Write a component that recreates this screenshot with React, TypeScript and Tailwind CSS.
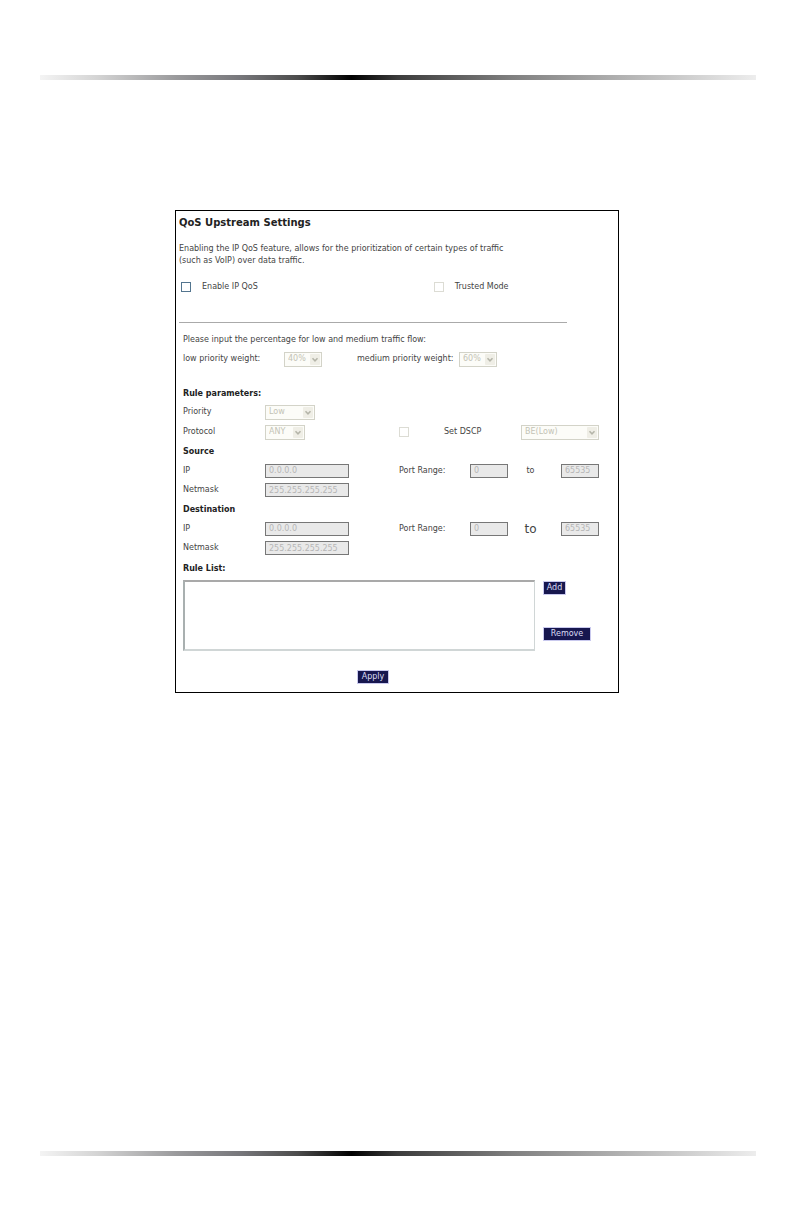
import type { ReactNode } from 'react'
import clsx from 'clsx'

function Divider() {
  return (
    <div className="ml-10 mr-9 h-[5px] bg-[linear-gradient(to_right,#f4f4f4_0%,#d4d4d4_8%,#9a9a9c_19%,#77777b_28%,#4c4c4c_36%,#000_43.5%,#3c3c3c_50%,#808080_66%,#b4b4b4_82%,#ededed_100%)]" />
  )
}

type SelectBoxProps = {
  id: string
  value: string
  className: string
}

function SelectBox({ id, value, className }: SelectBoxProps) {
  return (
    <div className={clsx('relative h-[15px] shrink-0', className)}>
      <select
        id={id}
        disabled
        className="block h-full w-full appearance-none border border-[#d3d3c8] bg-[#fcfcf8] pl-[3px] text-[8px] leading-3 text-[#c3c3b6] opacity-100"
      >
        <option>{value}</option>
      </select>
      <svg
        viewBox="0 0 10 11"
        className="pointer-events-none absolute right-[2px] top-[2px] h-[11px] w-[10px]"
        aria-hidden="true"
      >
        <rect width="10" height="11" rx="1" fill="#efeee6" />
        <path d="M2.5 4.2 L5 6.8 L7.5 4.2" fill="none" stroke="#b5b5a9" strokeWidth="1.5" />
      </svg>
    </div>
  )
}

type CheckBoxProps = {
  id: string
  disabled?: boolean
}

function CheckBox({ id, disabled }: CheckBoxProps) {
  return (
    <input
      id={id}
      type="checkbox"
      disabled={disabled}
      className={clsx(
        'size-[10px] shrink-0 appearance-none border bg-white checked:bg-[#53758f]',
        disabled ? 'border-[#dcdcd4]' : 'border-[#53758f]',
      )}
    />
  )
}

type TextBoxProps = {
  id: string
  value: string
  className: string
}

function TextBox({ id, value, className }: TextBoxProps) {
  return (
    <input
      id={id}
      type="text"
      disabled
      defaultValue={value}
      className={clsx(
        'h-[14px] min-w-0 border border-[#777] bg-[#e9e9e9] px-[3px] text-[8px] leading-3 text-[#b6b6b6]',
        className,
      )}
    />
  )
}

function ActionButton({ children, className }: { children: ReactNode; className: string }) {
  return (
    <button
      type="button"
      className={clsx(
        'h-[14px] border border-[#c9c9ee] bg-[#17174f] text-center text-[8px] leading-3 text-[#dcdcf4]',
        className,
      )}
    >
      {children}
    </button>
  )
}

const rowGrid = 'grid grid-cols-[82fr_134fr_219fr] items-center'

type AddressRowsProps = {
  name: string
  title: string
  toClass: string
}

function AddressRows({ name, title, toClass }: AddressRowsProps) {
  return (
    <section>
      <h2 className="h-[19px] font-bold leading-5 text-[#222]">{title}</h2>
      <div className={clsx(rowGrid, 'h-[19px]')}>
        <label htmlFor={`${name}-ip`}>IP</label>
        <TextBox id={`${name}-ip`} value="0.0.0.0" className="w-[84px]" />
        <div className="flex items-center">
          <label htmlFor={`${name}-port-start`} className="w-[71px]">
            Port Range:
          </label>
          <TextBox id={`${name}-port-start`} value="0" className="w-[38px]" />
          <label htmlFor={`${name}-port-end`} className={clsx('w-[53px] pr-2 text-center', toClass)}>
            to
          </label>
          <TextBox id={`${name}-port-end`} value="65535" className="w-[38px]" />
        </div>
      </div>
      <div className={clsx(rowGrid, 'h-5')}>
        <label htmlFor={`${name}-netmask`}>Netmask</label>
        <TextBox id={`${name}-netmask`} value="255.255.255.255" className="w-[84px]" />
      </div>
    </section>
  )
}

export default function App() {
  return (
    <div className="flex min-h-screen flex-col bg-white pb-[68px] pt-[75px] font-['Verdana','DejaVu_Sans',sans-serif]">
      <Divider />

      <main className="mb-10 mt-[130px] pl-[2px]">
        <form className="mx-auto w-full max-w-[444px] border border-black bg-white pb-2 pt-1 text-[8px] leading-3 text-[#444]">
          {/* Intro */}
          <div className="pl-[3px]">
            <h1 className="text-[10px] font-bold leading-4 text-[#222]">QoS Upstream Settings</h1>
            <p className="mt-3">
              Enabling the IP QoS feature, allows for the prioritization of certain types of traffic
              <br />
              (such as VoIP) over data traffic.
            </p>
            <div className="mt-[10px] grid h-5 grid-cols-[254fr_185fr] items-center pl-[2px]">
              <div className="flex items-center gap-[11px]">
                <CheckBox id="enable-qos" />
                <label htmlFor="enable-qos">Enable IP QoS</label>
              </div>
              <div className="flex items-center gap-[11px]">
                <CheckBox id="trusted-mode" disabled />
                <label htmlFor="trusted-mode">Trusted Mode</label>
              </div>
            </div>
            <hr className="mr-[51px] mt-[25px] border-[#aaa]" />
          </div>

          <div className="pl-[7px]">
            {/* Queue weights */}
            <p className="mt-[11px]">Please input the percentage for low and medium traffic flow:</p>
            <div className="mt-[3px] flex h-5 items-center">
              <label htmlFor="low-weight" className="w-[101px]">
                low priority weight:
              </label>
              <SelectBox id="low-weight" value="40%" className="w-[38px]" />
              <label htmlFor="medium-weight" className="ml-[35px] w-[102px]">
                medium priority weight:
              </label>
              <SelectBox id="medium-weight" value="60%" className="w-[38px]" />
            </div>

            {/* Rule parameters */}
            <h2 className="mt-4 h-[17px] font-bold leading-[18px] text-[#222]">Rule parameters:</h2>
            <div className={clsx(rowGrid, 'h-5')}>
              <label htmlFor="priority">Priority</label>
              <SelectBox id="priority" value="Low" className="w-[50px]" />
            </div>
            <div className={clsx(rowGrid, 'h-5')}>
              <label htmlFor="protocol">Protocol</label>
              <SelectBox id="protocol" value="ANY" className="w-10" />
              <div className="flex items-center">
                <CheckBox id="set-dscp" disabled />
                <label htmlFor="set-dscp" className="ml-[35px] w-[77px]">
                  Set DSCP
                </label>
                <SelectBox id="dscp" value="BE(Low)" className="w-[78px]" />
              </div>
            </div>

            <AddressRows name="source" title="Source" toClass="text-[8px]" />
            <AddressRows name="destination" title="Destination" toClass="text-xs" />

            {/* Rule list */}
            <label htmlFor="rule-list" className="block h-5 font-bold leading-[22px] text-[#222]">
              Rule List:
            </label>
            <div className="mt-[2px] flex gap-2">
              <select
                id="rule-list"
                multiple
                className="h-[71px] w-[352px] appearance-none border-b-2 border-l-2 border-r border-t-2 border-b-[#d0d6d6] border-l-[#a9b0b0] border-r-[#d0d6d6] border-t-[#a9a9a9] bg-white"
              />
              <div className="flex flex-col items-start justify-between pb-[10px] pt-px">
                <ActionButton className="w-[23px]">Add</ActionButton>
                <ActionButton className="w-12">Remove</ActionButton>
              </div>
            </div>
          </div>

          <div className="mt-[19px] flex justify-center pr-12">
            <ActionButton className="w-8">Apply</ActionButton>
          </div>
        </form>
      </main>

      <div className="mt-auto">
        <Divider />
      </div>
    </div>
  )
}
